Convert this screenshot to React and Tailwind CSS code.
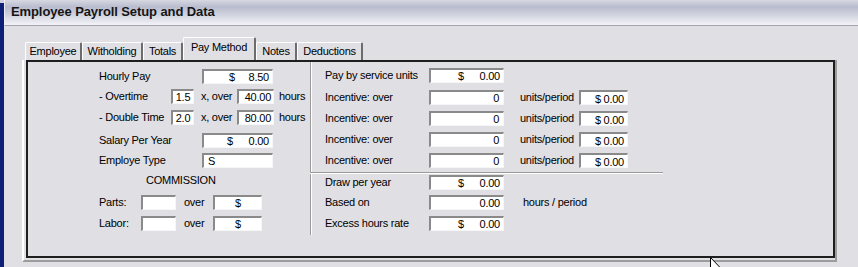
import React from 'react';

const Box = ({ className = '', children }) => (
  <div
    className={`h-[15px] shrink-0 flex items-center bg-white border-t-2 border-l-2 border-t-[#8a8a8a] border-l-[#8a8a8a] border-b border-r border-b-[#f6f6f8] border-r-[#f6f6f8] leading-none ${className}`}
  >
    {children}
  </div>
);

const Money = ({ className = '', value }) => (
  <Box className={`justify-between pr-[3px] ${className}`}>
    <span>$</span>
    <span>{value}</span>
  </Box>
);

const Tab = ({ label, width, active }) => (
  <div
    className={`${width} flex items-center justify-center border-t border-l border-white border-r-2 border-r-[#6c6c6c] rounded-t-[2px] ${
      active ? 'h-[23px] pb-[3px]' : 'h-[18px]'
    }`}
  >
    {label}
  </div>
);

const tabs = [
  { label: 'Employee', width: 'w-[57px]' },
  { label: 'Witholding', width: 'w-[61px]' },
  { label: 'Totals', width: 'w-[40px]' },
  { label: 'Pay Method', width: 'w-[73px]', active: true },
  { label: 'Notes', width: 'w-[41px]' },
  { label: 'Deductions', width: 'w-[66px]' },
];

const Incentive = ({ className = '' }) => (
  <div className={`flex items-center h-[15px] ${className}`}>
    <span className="w-[104px]">Incentive: over</span>
    <Box className="w-[75px] justify-end pr-[4px]">0</Box>
    <span className="ml-[16px] w-[59px]">units/period</span>
    <Box className="w-[49px] justify-end pr-[3px] pt-[2px]">$ 0.00</Box>
  </div>
);

export default function App() {
  return (
    <div className="relative w-[858px] h-[267px] flex overflow-hidden bg-[#dfdfe4] text-black text-[11px] tracking-[-0.25px] [font-family:'Liberation_Sans',Arial,sans-serif]">
      {/* window edge */}
      <div className="w-[4px] h-full border-t-[3px] border-t-[#cfd1dc] bg-[#0e1f78]" />

      <div className="flex-1 flex flex-col">
        {/* title strip */}
        <div className="h-[26px] shrink-0 flex items-center pl-[6px] pb-[1px] border-l border-l-[#eeeef4] border-b border-b-[#a2a4b2] bg-[linear-gradient(to_bottom,#d6d8e2_0%,#b9bccd_28%,#d3d5e0_62%,#f3f3f7_100%)]">
          <span className="text-[13px] font-bold tracking-[-0.1px] text-[#151515]">
            Employee Payroll Setup and Data
          </span>
        </div>

        {/* tabs */}
        <div className="mt-[11px] ml-[21px] h-[23px] flex items-end">
          {tabs.map(t => (
            <Tab key={t.label} {...t} />
          ))}
        </div>

        {/* tab page */}
        <div className="ml-[18px] w-[815px] h-[202px] pl-[2px] pb-[2px] border-l-2 border-l-white border-r-2 border-b-2 border-r-[#9c9c9c] border-b-[#9c9c9c]">
          <div className="h-full w-full flex border-2 border-[#1e1e1e]">
            {/* left column */}
            <div className="w-[282px] pl-[71px] pt-[7px] flex flex-col">
              <div className="flex items-center h-[15px]">
                <span className="w-[103px]">Hourly Pay</span>
                <Money className="w-[71px] pl-[25px]" value="8.50" />
              </div>
              <div className="flex items-center h-[15px] mt-[5px]">
                <span className="w-[72px]">- Overtime</span>
                <Box className="w-[23px] justify-center pt-[1px]">1.5</Box>
                <span className="ml-[7px] w-[36px]">x, over</span>
                <Box className="w-[37px] justify-end pr-[2px] pt-[1px]">40.00</Box>
                <span className="ml-[5px]">hours</span>
              </div>
              <div className="flex items-center h-[15px] mt-[6px]">
                <span className="w-[72px]">- Double Time</span>
                <Box className="w-[23px] justify-center pt-[1px]">2.0</Box>
                <span className="ml-[7px] w-[36px]">x, over</span>
                <Box className="w-[37px] justify-end pr-[2px] pt-[1px]">80.00</Box>
                <span className="ml-[5px]">hours</span>
              </div>
              <div className="flex items-center h-[15px] mt-[8px]">
                <span className="w-[103px]">Salary Per Year</span>
                <Money className="w-[71px] pl-[23px]" value="0.00" />
              </div>
              <div className="flex items-center h-[15px] mt-[5px]">
                <span className="w-[103px]">Employe Type</span>
                <Box className="w-[71px] pl-[4px]">S</Box>
              </div>
              <div className="h-[15px] mt-[5px] pl-[47px] flex items-center">COMMISSION</div>
              <div className="flex items-center h-[15px] mt-[7px]">
                <span className="w-[42px]">Parts:</span>
                <Box className="w-[35px]" />
                <span className="ml-[8px] w-[29px]">over</span>
                <Box className="w-[49px] justify-center">$</Box>
              </div>
              <div className="flex items-center h-[15px] mt-[6px]">
                <span className="w-[42px]">Labor:</span>
                <Box className="w-[35px]" />
                <span className="ml-[8px] w-[29px]">over</span>
                <Box className="w-[49px] justify-center">$</Box>
              </div>
            </div>

            {/* divider */}
            <div className="w-[2px] h-[173px] border-l border-l-[#9a9a9a] border-r border-r-white" />

            {/* right column */}
            <div className="flex-1 flex flex-col pt-[6px]">
              <div className="pl-[13px] flex flex-col">
                <div className="flex items-center h-[15px]">
                  <span className="w-[104px]">Pay by service units</span>
                  <Money className="w-[75px] pl-[27px]" value="0.00" />
                </div>
                <Incentive className="mt-[7px]" />
                <Incentive className="mt-[6px]" />
                <Incentive className="mt-[6px]" />
                <Incentive className="mt-[6px]" />
              </div>
              <div className="mt-[4px] -ml-[2px] w-[353px] h-[2px] border-t border-t-[#9a9a9a] border-b border-b-white" />
              <div className="pl-[13px] flex flex-col">
                <div className="flex items-center h-[15px] mt-[1px]">
                  <span className="w-[104px]">Draw per year</span>
                  <Money className="w-[75px] pl-[27px]" value="0.00" />
                </div>
                <div className="flex items-center h-[15px] mt-[5px]">
                  <span className="w-[104px]">Based on</span>
                  <Box className="w-[75px] justify-end pr-[3px]">0.00</Box>
                  <span className="ml-[19px]">hours / period</span>
                </div>
                <div className="flex items-center h-[15px] mt-[6px]">
                  <span className="w-[104px]">Excess hours rate</span>
                  <Money className="w-[75px] pl-[27px]" value="0.00" />
                </div>
              </div>
            </div>
          </div>
        </div>
      </div>

      {/* mouse pointer */}
      <svg className="absolute left-[710px] top-[257px]" width="13" height="20" viewBox="0 0 13 20">
        <path d="M0.5 0.5 L0.5 16 L4 12.5 L6.5 18.5 L8.5 17.5 L6 11.5 L11 11.5 Z" fill="white" stroke="black" strokeWidth="1" />
      </svg>
    </div>
  );
}
